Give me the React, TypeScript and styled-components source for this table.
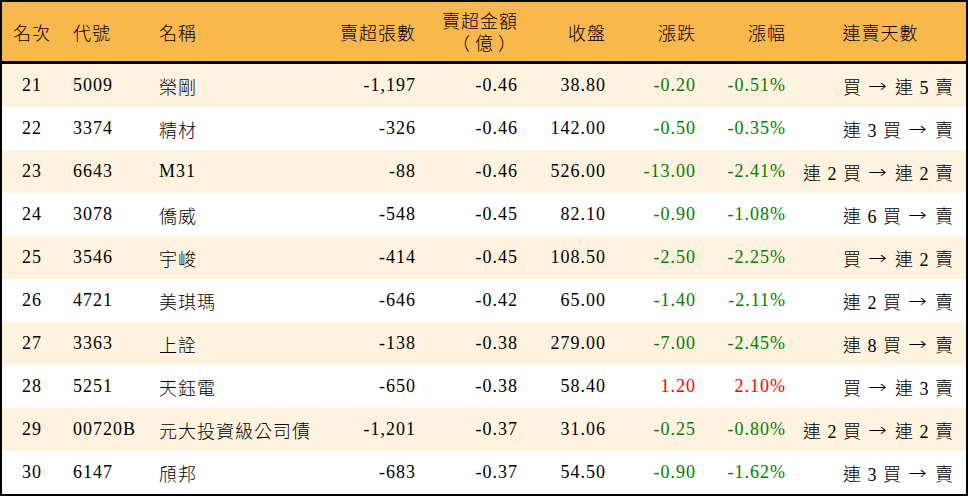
import React from 'react';
import styled, { createGlobalStyle } from 'styled-components';

const GlobalStyle = createGlobalStyle`
  * { box-sizing: border-box; }
  body {
    margin: 0;
    background: #ffffff;
    font-family: "Liberation Serif", "Noto Sans CJK TC", serif;
  }
`;

const COLUMNS = '60px 86px 182px 95px 102px 88px 90px 90px 171px';

type Align = 'left' | 'right' | 'center';

interface Rank {
  rank: number;
  code: string;
  name: string;
  lots: string;
  amount: string;
  close: string;
  change: string;
  pct: string;
  streak: string;
}

const rows: Rank[] = [
  { rank: 21, code: '5009', name: '榮剛', lots: '-1,197', amount: '-0.46', close: '38.80', change: '-0.20', pct: '-0.51%', streak: '買 → 連 5 賣' },
  { rank: 22, code: '3374', name: '精材', lots: '-326', amount: '-0.46', close: '142.00', change: '-0.50', pct: '-0.35%', streak: '連 3 買 → 賣' },
  { rank: 23, code: '6643', name: 'M31', lots: '-88', amount: '-0.46', close: '526.00', change: '-13.00', pct: '-2.41%', streak: '連 2 買 → 連 2 賣' },
  { rank: 24, code: '3078', name: '僑威', lots: '-548', amount: '-0.45', close: '82.10', change: '-0.90', pct: '-1.08%', streak: '連 6 買 → 賣' },
  { rank: 25, code: '3546', name: '宇峻', lots: '-414', amount: '-0.45', close: '108.50', change: '-2.50', pct: '-2.25%', streak: '買 → 連 2 賣' },
  { rank: 26, code: '4721', name: '美琪瑪', lots: '-646', amount: '-0.42', close: '65.00', change: '-1.40', pct: '-2.11%', streak: '連 2 買 → 賣' },
  { rank: 27, code: '3363', name: '上詮', lots: '-138', amount: '-0.38', close: '279.00', change: '-7.00', pct: '-2.45%', streak: '連 8 買 → 賣' },
  { rank: 28, code: '5251', name: '天鈺電', lots: '-650', amount: '-0.38', close: '58.40', change: '1.20', pct: '2.10%', streak: '買 → 連 3 賣' },
  { rank: 29, code: '00720B', name: '元大投資級公司債', lots: '-1,201', amount: '-0.37', close: '31.06', change: '-0.25', pct: '-0.80%', streak: '連 2 買 → 連 2 賣' },
  { rank: 30, code: '6147', name: '頎邦', lots: '-683', amount: '-0.37', close: '54.50', change: '-0.90', pct: '-1.62%', streak: '連 3 買 → 賣' },
];

// split the streak on the arrow so the arrow can use a wider glyph
const renderStreak = (s: string) => {
  const [before, after] = s.split('→');
  return (
    <>
      {before}
      <Arrow>→</Arrow>
      {after}
    </>
  );
};

const App: React.FC = () => {
  return (
    <>
      <GlobalStyle />
      <Table>
        <HeaderRow>
          <Cell $align="center">名次</Cell>
          <Cell $align="left">代號</Cell>
          <Cell $align="left">名稱</Cell>
          <Cell $align="right">賣超張數</Cell>
          <Cell $align="right">
            <TwoLine>
              <span>賣超金額</span>
              <Unit>（億）</Unit>
            </TwoLine>
          </Cell>
          <Cell $align="right">收盤</Cell>
          <Cell $align="right">漲跌</Cell>
          <Cell $align="right">漲幅</Cell>
          <Cell $align="center">連賣天數</Cell>
        </HeaderRow>

        {rows.map((r, i) => {
          const up = !r.change.startsWith('-');
          return (
            <BodyRow key={r.rank} $shaded={i % 2 === 0}>
              <Cell $align="center">{r.rank}</Cell>
              <Cell $align="left">{r.code}</Cell>
              <Cell $align="left">{r.name}</Cell>
              <Cell $align="right">{r.lots}</Cell>
              <Cell $align="right">{r.amount}</Cell>
              <Cell $align="right">{r.close}</Cell>
              <Cell $align="right">
                <Move $up={up}>{r.change}</Move>
              </Cell>
              <Cell $align="right">
                <Move $up={up}>{r.pct}</Move>
              </Cell>
              <StreakCell $align="right">{renderStreak(r.streak)}</StreakCell>
            </BodyRow>
          );
        })}
      </Table>
    </>
  );
};

export default App;

const Table = styled.div`
  width: 968px;
  height: 496px;
  border: 2px solid #000;
  background: #fff;
  color: #000;
  font-size: 18px;
  letter-spacing: 1px;
  font-weight: 300;
`;

const HeaderRow = styled.div`
  display: grid;
  grid-template-columns: ${COLUMNS};
  height: 62px;
  background: #f9b84c;
  border-bottom: 3px solid #000;
`;

const BodyRow = styled.div<{ $shaded: boolean }>`
  display: grid;
  grid-template-columns: ${COLUMNS};
  height: 43px;
  background: ${(p) => (p.$shaded ? '#fef3df' : '#ffffff')};
`;

const Cell = styled.div<{ $align: Align }>`
  display: flex;
  align-items: center;
  justify-content: ${(p) =>
    p.$align === 'left' ? 'flex-start' : p.$align === 'right' ? 'flex-end' : 'center'};
  padding: ${(p) => (p.$align === 'left' ? '0 0 0 11px' : p.$align === 'right' ? '0 9px 0 0' : '0')};
  white-space: pre;
`;

const StreakCell = styled(Cell)`
  padding-right: 12px;
`;

const Arrow = styled.span`
  font-family: "DejaVu Sans", sans-serif;
  font-size: 18px;
  display: inline-block;
  transform: scaleX(1.25);
  margin: 0 3px;
`;

const TwoLine = styled.div`
  display: flex;
  flex-direction: column;
  align-items: flex-end;
  line-height: 20px;
  padding-top: 1px;
`;

const Unit = styled.span`
  font-family: "Noto Sans CJK TC", sans-serif;
  letter-spacing: 5px;
  margin-right: -3px;
`;

const Move = styled.span<{ $up: boolean }>`
  color: ${(p) => (p.$up ? '#ff0000' : '#008000')};
`;
